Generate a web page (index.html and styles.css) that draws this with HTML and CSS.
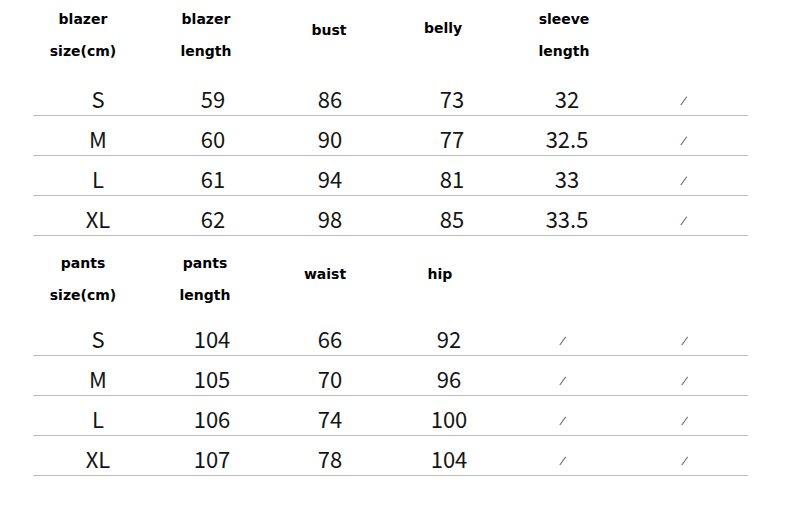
FILE: index.html
```html
<!DOCTYPE html>
<html lang="en">
<head>
<meta charset="utf-8">
<title>Size chart</title>
<link rel="stylesheet" href="styles.css">
</head>
<body>
<main class="chart">
  <section class="block blazer">
    <div class="head">
      <div class="hcell two">blazer<br>size(cm)</div>
      <div class="hcell two">blazer<br>length</div>
      <div class="hcell one">bust</div>
      <div class="hcell one up">belly</div>
      <div class="hcell two">sleeve<br>length</div>
      <div class="hcell"></div>
    </div>
    <div class="row"><span>S</span><span>59</span><span>86</span><span>73</span><span>32</span><span><i class="na">/</i></span></div>
    <div class="row"><span>M</span><span>60</span><span>90</span><span>77</span><span>32.5</span><span><i class="na">/</i></span></div>
    <div class="row"><span>L</span><span>61</span><span>94</span><span>81</span><span>33</span><span><i class="na">/</i></span></div>
    <div class="row"><span>XL</span><span>62</span><span>98</span><span>85</span><span>33.5</span><span><i class="na">/</i></span></div>
  </section>
  <section class="block pants">
    <div class="head">
      <div class="hcell two">pants<br>size(cm)</div>
      <div class="hcell two">pants<br>length</div>
      <div class="hcell one">waist</div>
      <div class="hcell one">hip</div>
      <div class="hcell"></div>
      <div class="hcell"></div>
    </div>
    <div class="row"><span>S</span><span>104</span><span>66</span><span>92</span><span><i class="na">/</i></span><span><i class="na">/</i></span></div>
    <div class="row"><span>M</span><span>105</span><span>70</span><span>96</span><span><i class="na">/</i></span><span><i class="na">/</i></span></div>
    <div class="row"><span>L</span><span>106</span><span>74</span><span>100</span><span><i class="na">/</i></span><span><i class="na">/</i></span></div>
    <div class="row"><span>XL</span><span>107</span><span>78</span><span>104</span><span><i class="na">/</i></span><span><i class="na">/</i></span></div>
  </section>
</main>
</body>
</html>
```
FILE: styles.css
```css
html, body {
  margin: 0;
  padding: 0;
  background: #ffffff;
}

.chart {
  width: 715px;
  margin-left: 33px;
  display: flex;
  flex-direction: column;
}

.head {
  display: grid;
  font-family: "DejaVu Sans", sans-serif;
  font-weight: bold;
  font-size: 14px;
  line-height: 32px;
  color: #000;
}

.blazer .head {
  height: 76px;
  padding-top: 3px;
  box-sizing: border-box;
  grid-template-columns: 100px 146px 100px 128px 114px 1fr;
}

.pants .head {
  height: 80px;
  padding-top: 11px;
  box-sizing: border-box;
  grid-template-columns: 100px 144px 96px 134px 114px 1fr;
}

.hcell {
  text-align: center;
  white-space: nowrap;
}

.hcell.one {
  padding-top: 11px;
}

.hcell.one.up {
  padding-top: 9px;
}

.row {
  display: grid;
  height: 40px;
  box-sizing: border-box;
  padding-top: 5px;
  border-bottom: 1px solid #bebebe;
  font-family: "Noto Sans CJK SC", "Noto Sans", sans-serif;
  font-size: 22px;
  line-height: 34px;
  color: #151515;
}

.blazer .row {
  grid-template-columns: 130px 100px 134px 110px 120px 114px 1fr;
}

.pants .row {
  grid-template-columns: 130px 98px 138px 100px 128px 116px 1fr;
}

.row span {
  text-align: center;
}

.na {
  font-family: "DejaVu Sans", sans-serif;
  font-style: normal;
  font-size: 10px;
  color: #222;
  display: inline-block;
  transform: skewX(-22deg);
  vertical-align: 4px;
}
```
